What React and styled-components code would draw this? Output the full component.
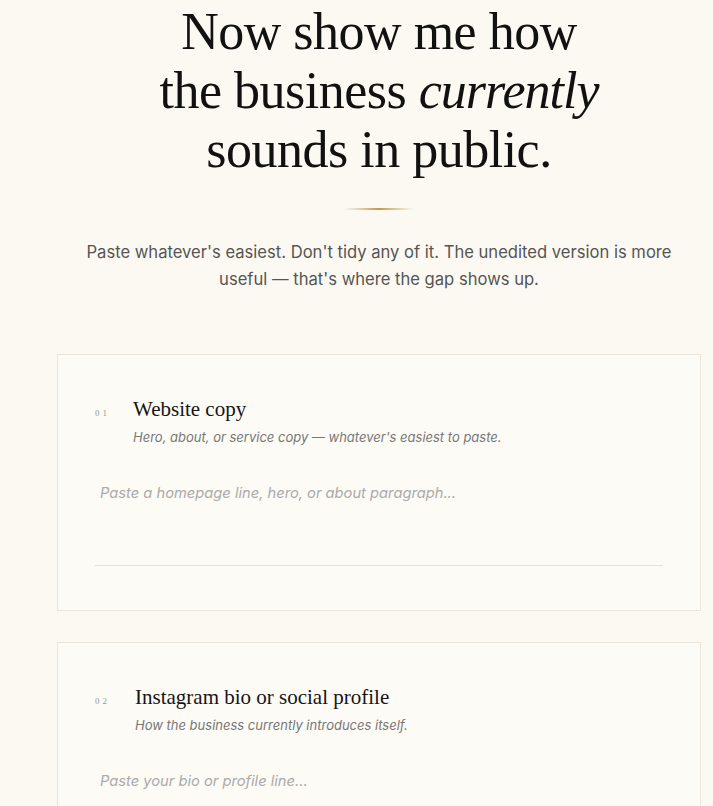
import styled, { createGlobalStyle } from "styled-components";

const GlobalStyle = createGlobalStyle`
  html, body {
    margin: 0;
    padding: 0;
    background: #fcf9f2;
  }
  body {
    font-family: "Inter", "Liberation Sans", sans-serif;
    color: #1a1a1a;
  }
`;

const Page = styled.main`
  padding: 0 12px 40px 57px;
  display: flex;
  flex-direction: column;
`;

const Header = styled.header`
  display: flex;
  flex-direction: column;
  align-items: center;
  text-align: center;
`;

const Title = styled.h1`
  margin: 0;
  padding-top: 2px;
  font-family: "Liberation Serif", serif;
  font-weight: 400;
  font-size: 52px;
  line-height: 59px;
  letter-spacing: -0.5px;
  color: #111;

  em {
    font-style: italic;
    letter-spacing: -1px;
  }
`;

const Rule = styled.div`
  width: 70px;
  height: 2px;
  margin: 29px 0 29px;
  background: linear-gradient(90deg, rgba(190, 140, 60, 0), #c39a52 50%, rgba(190, 140, 60, 0));
`;

const Lead = styled.p`
  margin: 0;
  max-width: 620px;
  font-size: 16.6px;
  line-height: 27px;
  color: #555;
`;

const Cards = styled.div`
  margin-top: 61px;
  display: flex;
  flex-direction: column;
  gap: 31px;
`;

const Card = styled.section`
  border: 1px solid #ebe5da;
  background: #fdfbf6;
  padding: 40px 37px 44px 37px;
`;

const CardHead = styled.div`
  display: grid;
  grid-template-columns: ${(p) => p.$numWidth || 38}px 1fr;
  align-items: baseline;
`;

const Num = styled.span`
  font-family: "Liberation Serif", serif;
  font-size: 9px;
  letter-spacing: 3px;
  color: #999;
`;

const CardTitle = styled.h2`
  margin: 0;
  font-family: "Liberation Serif", serif;
  font-weight: 400;
  font-size: 21px;
  line-height: 28px;
  color: #151515;
`;

const CardHint = styled.p`
  grid-column: 2;
  margin: 6px 0 0;
  font-size: 13px;
  font-style: italic;
  color: #777;
`;

const Field = styled.textarea`
  display: block;
  box-sizing: border-box;
  width: 100%;
  height: 88px;
  margin-top: 33px;
  padding: 6px 5px;
  border: none;
  border-bottom: 1px solid #e6e1d7;
  background: transparent;
  resize: none;
  outline: none;
  font-family: "Inter", "Liberation Sans", sans-serif;
  font-size: 14.7px;
  font-style: italic;
  color: #333;

  &::placeholder {
    color: #aaa;
  }
`;

const fields = [
  {
    num: "01",
    title: "Website copy",
    hint: "Hero, about, or service copy — whatever's easiest to paste.",
    placeholder: "Paste a homepage line, hero, or about paragraph...",
  },
  {
    num: "02",
    title: "Instagram bio or social profile",
    hint: "How the business currently introduces itself.",
    placeholder: "Paste your bio or profile line...",
    numWidth: 40,
  },
];

export default function App() {
  return (
    <>
      <GlobalStyle />
      <Page>
        <Header>
          <Title>
            Now show me how
            <br />
            the business <em>currently</em>
            <br />
            sounds in public.
          </Title>
          <Rule />
          <Lead>
            Paste whatever's easiest. Don't tidy any of it. The unedited version is more
            useful — that's where the gap shows up.
          </Lead>
        </Header>

        <Cards>
          {fields.map((f) => (
            <Card key={f.num}>
              <CardHead $numWidth={f.numWidth}>
                <Num>{f.num}</Num>
                <CardTitle>{f.title}</CardTitle>
                <CardHint>{f.hint}</CardHint>
              </CardHead>
              <Field placeholder={f.placeholder} />
            </Card>
          ))}
        </Cards>
      </Page>
    </>
  );
}
